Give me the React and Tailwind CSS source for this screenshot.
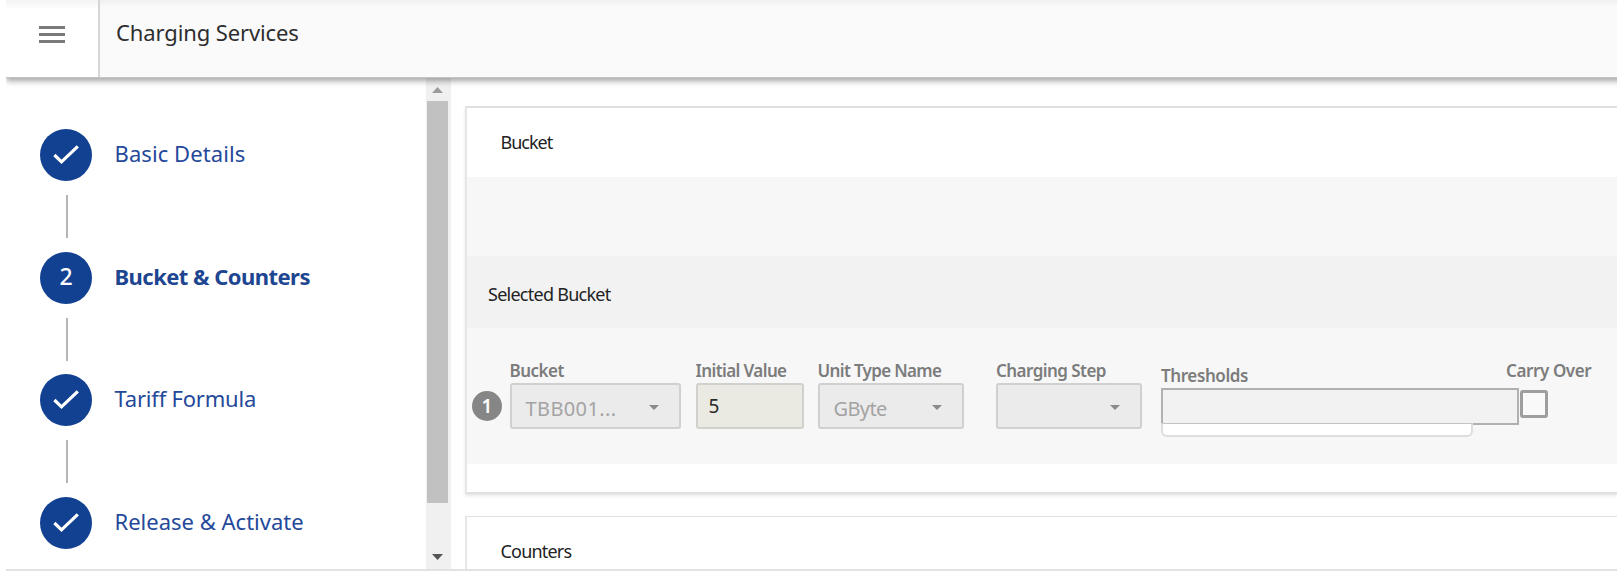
const font = "font-['Noto_Sans',sans-serif]";

function Check() {
  return (
    <svg viewBox="0 0 26 20" className="-mt-px h-5 w-[26px]" fill="none" stroke="#fff" strokeWidth="3.2">
      <path d="M1.4 10 L8.5 16.9 L24.8 1.4" />
    </svg>
  );
}

function Step({ label, number, active, tracking, last }) {
  return (
    <li className="flex h-[122.7px] shrink-0 flex-col">
      <div className="flex h-[52px] shrink-0 items-center">
        <span className="flex size-[52px] shrink-0 items-center justify-center rounded-full bg-[#124191] text-[23px] font-medium text-white">
          {number ? <span className="-mt-0.5">{number}</span> : <Check />}
        </span>
        <span
          className={`ml-[22.5px] whitespace-nowrap text-[22px] leading-8 ${active ? "-mt-1 font-bold text-[#1d4590]" : "-mt-[5px] text-[#24499a]"} ${tracking}`}
        >
          {label}
        </span>
      </div>
      {!last && <span className="ml-[26px] mt-[14px] h-[43px] w-[1.5px] shrink-0 bg-[#b5b5b5]" />}
    </li>
  );
}

function Caret() {
  return (
    <svg viewBox="0 0 10 5" className="mt-[2px] h-[5px] w-[10px]" fill="#8a8a8a">
      <path d="M0 0H10L5 5Z" />
    </svg>
  );
}

function Field({ label, tracking, className, children }) {
  return (
    <div className={`flex shrink-0 flex-col ${className}`}>
      <span className={`flex h-[25px] items-center whitespace-nowrap text-[17px] font-semibold text-[#7c7c7c] ${tracking}`}>
        {label}
      </span>
      {children}
    </div>
  );
}

function Select({ value = "", tracking = "" }) {
  return (
    <div className="flex h-[46px] items-center justify-between rounded-[3px] border-2 border-[#d0d0d0] bg-[#ebebeb] pl-[14px] pr-[20px]">
      <span className={`mt-[6px] text-[20px] text-[#a3a3a3] ${tracking}`}>{value}</span>
      <Caret />
    </div>
  );
}

function Scrollbar() {
  return (
    <div className="flex w-[25px] shrink-0 flex-col items-center bg-[#f0f0f0] pr-[2px]">
      <div className="flex h-[23px] shrink-0 items-center">
        <svg viewBox="0 0 11 6" className="h-[6px] w-[11px]" fill="#9c9c9c">
          <path d="M0 6H11L5.5 0Z" />
        </svg>
      </div>
      <div className="h-[402px] w-[20.5px] shrink-0 bg-[#c1c1c1]" />
      <svg viewBox="0 0 11 6" className="mt-[51px] h-[6px] w-[11px]" fill="#555">
        <path d="M0 0H11L5.5 6Z" />
      </svg>
    </div>
  );
}

export default function App() {
  return (
    <div className={`h-[583px] w-[1617px] overflow-hidden bg-white pl-[6px] ${font}`}>
      <div className="overflow-hidden">
        <header className="relative z-10 -mr-3 flex h-[78px] border-b border-[#c4c4c4] bg-[#fafafa] bg-linear-to-b from-[#f0f0f0] to-[#fafafa] to-[7px] shadow-[0_3px_6px_rgba(0,0,0,0.36)]">
          <div className="flex w-[94px] shrink-0 flex-col items-start gap-1 border-r-2 border-[#d6d6d6] bg-linear-to-b from-[#f4f4f4] to-white to-[10px] pl-[33px] pt-[26px]">
            <span className="h-[3px] w-[26px] bg-[#7a7a7a]" />
            <span className="h-[3px] w-[26px] bg-[#7a7a7a]" />
            <span className="h-[3px] w-[26px] bg-[#7a7a7a]" />
          </div>
          <h1 className="ml-[16px] mt-[16px] whitespace-nowrap text-[22px] leading-8 tracking-[-0.12px] text-[#2e2e2e]">
            Charging Services
          </h1>
        </header>

        <div className="flex h-[493px] overflow-hidden border-b-2 border-[#e2e2e2]">
          <nav className="w-[420px] shrink-0 overflow-hidden">
            <ul className="flex flex-col pl-[34px] pt-[51px]">
              <Step label="Basic Details" tracking="tracking-[0.08px]" />
              <Step label="Bucket & Counters" number="2" active tracking="tracking-[-0.54px]" />
              <Step label="Tariff Formula" tracking="tracking-[-0.2px]" />
              <Step label="Release & Activate" last tracking="" />
            </ul>
          </nav>
          <Scrollbar />

          <main className="min-w-0 grow overflow-hidden pl-[14px] pt-[28px]">
            <section className="h-[388px] border-y-2 border-l-2 border-[#e0e0e0] border-l-[#e6e6e6] bg-white shadow-[0_2px_3px_rgba(0,0,0,0.1)]">
              <h2 className="h-[69px] pl-[33.5px] pt-[18px] text-[18px] leading-8 tracking-[-1px] text-[#222]">Bucket</h2>
              <div className="h-[79px] bg-[#f7f7f7]" />
              <h3 className="h-[72px] bg-[#f2f2f2] pl-[21px] pt-[22px] text-[18px] leading-8 tracking-[-0.74px] text-[#222]">
                Selected Bucket
              </h3>
              <div className="flex h-[136px] bg-[#f7f7f7] pl-[5px] pt-[30px]">
                <span className="mt-[33px] flex size-[30px] shrink-0 items-center justify-center rounded-full bg-[#868686] text-[19px] font-semibold text-white">
                  1
                </span>
                <Field label="Bucket" tracking="tracking-[-0.5px]" className="ml-[7.5px] w-[171px]">
                  <Select value="TBB001..." tracking="tracking-[0.38px]" />
                </Field>
                <Field label="Initial Value" tracking="tracking-[-0.6px]" className="ml-[15px] w-[108px]">
                  <div className="flex h-[46px] items-center rounded-[3px] border-2 border-[#d0d0cc] bg-[#eaeae2] pl-[11px] text-[19px] text-[#2b2b2b]">
                    5
                  </div>
                </Field>
                <Field label="Unit Type Name" tracking="tracking-[-0.66px]" className="ml-[14px] w-[146px]">
                  <Select value="GByte" tracking="tracking-[-0.6px]" />
                </Field>
                <Field label="Charging Step" tracking="tracking-[-0.55px]" className="ml-[32.5px] w-[146px]">
                  <Select />
                </Field>
                <Field label="Thresholds" tracking="tracking-[-0.4px]" className="ml-[19px] mt-[5px] w-[358px]">
                  <div className="h-[37px] shrink-0 border-2 border-[#b0b0b0] bg-[#f2f2f2]" />
                  <div className="relative -mt-[2px] h-[14px] w-[312px] shrink-0 rounded-b-[6px] border-2 border-t border-[#dedede] border-t-[#c4c4c4] bg-white" />
                </Field>
                <Field label="Carry Over" tracking="tracking-[-0.4px]" className="-ml-[13px] w-[100px]">
                  <div className="ml-[14px] mt-[7px] size-[28px] rounded-[3px] border-3 border-[#9e9e9e] bg-[#f9f9f9]" />
                </Field>
              </div>
            </section>

            <section className="mt-[22px] h-[120px] border-l-2 border-t border-[#e0e0e0] border-l-[#e6e6e6] bg-white">
              <h2 className="pl-[33.5px] pt-[18px] text-[18px] leading-8 tracking-[-0.8px] text-[#222]">Counters</h2>
            </section>
          </main>
        </div>
      </div>
    </div>
  );
}
